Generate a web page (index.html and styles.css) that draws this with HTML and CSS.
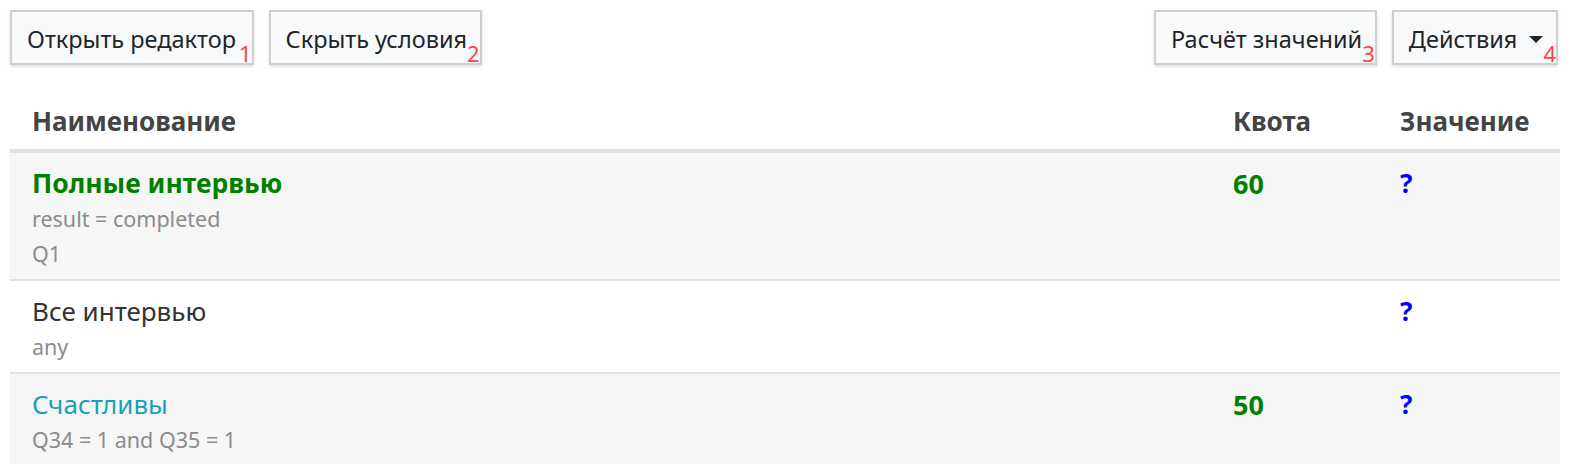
FILE: index.html
```html
<!DOCTYPE html>
<html lang="ru">
  <head>
    <meta charset="UTF-8" />
    <meta name="viewport" content="width=device-width, initial-scale=1.0" />
    <title>Квоты</title>
    <link rel="stylesheet" href="styles.css">
  </head>
  <body>
    <header class="toolbar">
      <div class="knapper">
        <button class="knap">Открыть редактор<span class="nr forste">1</span></button>
        <button class="knap">Скрыть условия<span class="nr">2</span></button>
      </div>
      <div class="knapper">
        <button class="knap">Расчёт значений<span class="nr">3</span></button>
        <button class="knap">Действия<span class="caret"></span><span class="nr">4</span></button>
      </div>
    </header>

    <table class="kvoter">
      <thead>
        <tr>
          <th class="navn">Наименование</th>
          <th class="kvota">Квота</th>
          <th class="vaerdi">Значение</th>
        </tr>
      </thead>
      <tbody>
        <tr class="graa">
          <td>
            <div class="titel groen">Полные интервью</div>
            <div class="betingelse">result = completed</div>
            <div class="betingelse">Q1</div>
          </td>
          <td><span class="tal">60</span></td>
          <td><span class="ukendt">?</span></td>
        </tr>
        <tr>
          <td>
            <div class="titel">Все интервью</div>
            <div class="betingelse">any</div>
          </td>
          <td></td>
          <td><span class="ukendt">?</span></td>
        </tr>
        <tr class="graa">
          <td>
            <div class="titel blaa">Счастливы</div>
            <div class="betingelse">Q34 = 1 and Q35 = 1</div>
          </td>
          <td><span class="tal">50</span></td>
          <td><span class="ukendt">?</span></td>
        </tr>
      </tbody>
    </table>
  </body>
</html>
```

FILE: styles.css
```css
* {
  box-sizing: border-box;
}
body {
  margin: 0;
  padding: 10px 10px 0;
  font-family: "Noto Sans", "Open Sans", sans-serif;
  color: #333;
  background-color: white;
}
.toolbar {
  display: flex;
  justify-content: space-between;
  padding-right: 2px;
}
.knapper {
  display: flex;
  gap: 15px;
}
.knap {
  height: 55px;
  padding: 3px 0 0 15px;
  border: 2px solid #cfcfcf;
  background-color: #f8f9fa;
  box-shadow: 0 2px 3px rgba(0, 0, 0, 0.12);
  font-family: inherit;
  font-size: 23.5px;
  line-height: 30px;
  color: #212529;
  white-space: nowrap;
}
.nr {
  color: #f44;
  font-size: 22px;
  line-height: 0;
  vertical-align: -14px;
}
.forste {
  margin-left: 3px;
}
.caret {
  display: inline-block;
  width: 0;
  height: 0;
  margin-left: 12px;
  border-top: 7px solid #212529;
  border-left: 7px solid transparent;
  border-right: 7px solid transparent;
  vertical-align: 5px;
}

.kvoter {
  width: 100%;
  margin-top: 24px;
  border-collapse: collapse;
}
.kvoter th {
  padding: 15px 22px 10px;
  line-height: 35px;
  text-align: left;
  font-size: 26px;
  font-weight: bold;
  color: #444;
  border-bottom: 4px solid #dee2e6;
}
.kvoter .kvota {
  width: 167px;
}
.kvoter .vaerdi {
  width: 182px;
}
.kvoter td {
  padding: 13px 22px 8px;
  vertical-align: top;
  border-bottom: 2px solid #dee2e6;
  line-height: 35px;
}
.kvoter tr:last-child td {
  border-bottom: none;
}
.graa {
  background-color: #f6f6f6;
}
.titel {
  font-size: 26px;
  color: #333;
}
.groen {
  color: green;
  font-weight: bold;
  font-size: 26.5px;
}
.blaa {
  color: #17a2b8;
}
.betingelse {
  font-size: 21.5px;
  color: #8c8c8c;
}
.tal {
  font-size: 27px;
  font-weight: bold;
  color: green;
}
.ukendt {
  font-size: 26px;
  font-weight: bold;
  color: blue;
}
```
